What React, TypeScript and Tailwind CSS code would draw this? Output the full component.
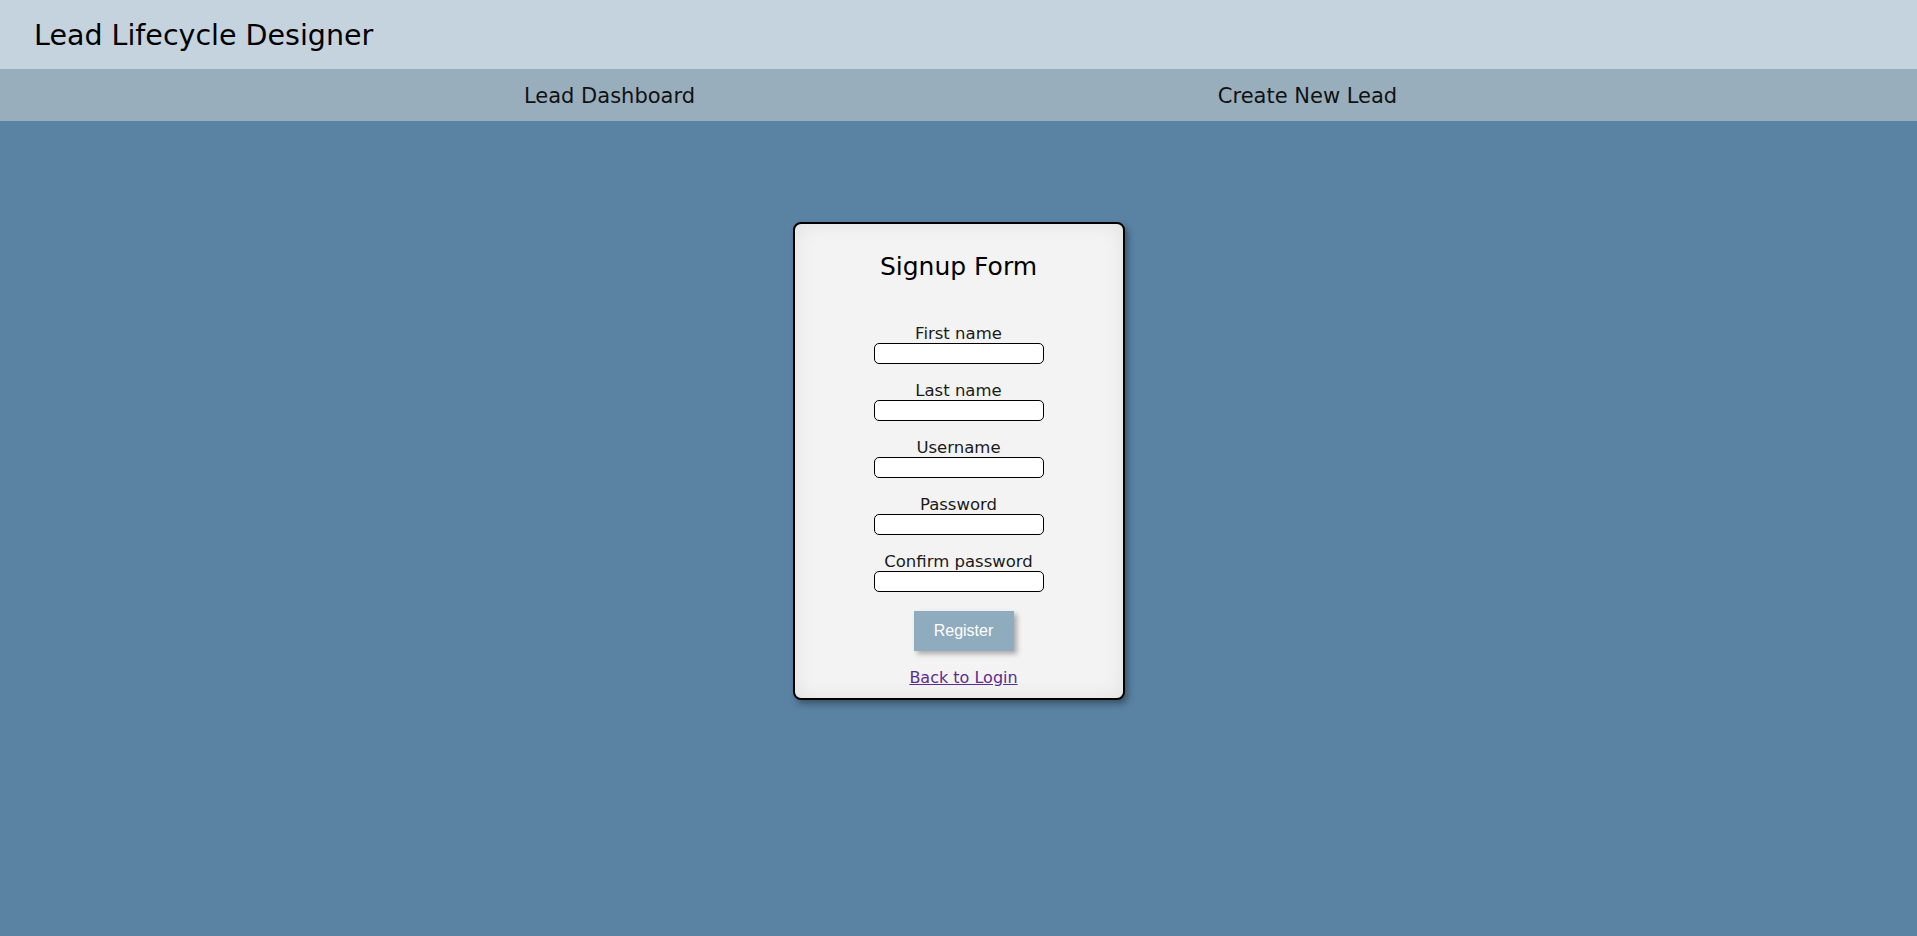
const fields = ['First name', 'Last name', 'Username', 'Password', 'Confirm password'];

export default function App() {
  return (
    <div className="min-h-screen w-full bg-[#5a82a3] font-['DejaVu_Sans',sans-serif] text-black">
      <header className="flex h-[69px] items-center bg-[#c5d3de] px-[34px] pt-[4px]">
        <h1 className="text-[28.5px] leading-none">Lead Lifecycle Designer</h1>
      </header>
      <nav className="h-[52px] bg-[#98aebc] pt-[3px]">
        <div className="mx-auto grid h-full w-[1396px] grid-cols-2 items-center text-center text-[21px] text-[#111]">
          <a href="#">Lead Dashboard</a>
          <a href="#">Create New Lead</a>
        </div>
      </nav>
      <main className="flex justify-center pt-[101px]">
        <div className="flex h-[478px] w-[332px] flex-col items-center rounded-[8px] border-2 border-black bg-[#f3f3f3] shadow-[inset_0_0_20px_rgba(0,0,0,0.08),3px_4px_6px_rgba(0,0,0,0.35)]">
          <h2 className="mt-[27px] text-[25px] leading-[32px]">Signup Form</h2>
          <form className="mt-[41px] flex flex-col items-center">
            {fields.map((f) => (
              <label key={f} className="mb-[17px] flex flex-col items-center text-[16.5px] leading-[19px] text-[#1a1a1a]">
                <span>{f}</span>
                <input
                  type={f.toLowerCase().includes('password') ? 'password' : 'text'}
                  className="h-[21px] w-[170px] rounded-[5px] border border-black bg-white"
                />
              </label>
            ))}
            <button
              type="button"
              className="ml-[10px] mt-[2px] h-[40px] w-[100px] bg-[#8fabbe] font-['Liberation_Sans',sans-serif] text-[16px] text-white shadow-[3px_3px_5px_rgba(0,0,0,0.3)]"
            >
              Register
            </button>
          </form>
          <a href="#" className="ml-[10px] mt-[15px] text-[16px] text-[#5b2d8e] underline">
            Back to Login
          </a>
        </div>
      </main>
    </div>
  );
}
